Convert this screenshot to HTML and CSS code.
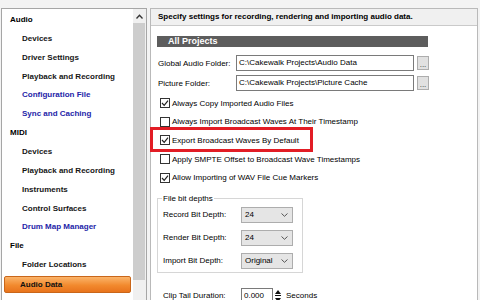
FILE: index.html
```html
<!DOCTYPE html>
<html>
<head>
    <title>Preferences - Audio Data</title>
    <link rel="stylesheet" href="styles.css">
</head>
<body>
    <div class="window">
        <div class="nav">
            <ul class="tree">
                <li class="cat">Audio</li>
                <li>Devices</li>
                <li>Driver Settings</li>
                <li>Playback and Recording</li>
                <li class="link">Configuration File</li>
                <li class="link">Sync and Caching</li>
                <li class="cat">MIDI</li>
                <li>Devices</li>
                <li>Playback and Recording</li>
                <li>Instruments</li>
                <li>Control Surfaces</li>
                <li class="link">Drum Map Manager</li>
                <li class="cat">File</li>
                <li>Folder Locations</li>
                <li class="sel">Audio Data</li>
            </ul>
            <div class="scroll">
                <div class="arrow">
                    <svg width="7" height="5" viewBox="0 0 7 5"><polyline points="0.5,4.5 3.5,1.2 6.5,4.5" fill="none" stroke="#333" stroke-width="1.3"/></svg>
                </div>
                <div class="thumb"></div>
            </div>
        </div>

        <div class="page">
            <div class="caption">Specify settings for recording, rendering and importing audio data.</div>
            <div class="content">
                <div class="section">All Projects</div>

                <div class="field first">
                    <span class="lbl">Global Audio Folder:</span>
                    <div class="path">C:\Cakewalk Projects\Audio Data</div>
                    <div class="more">...</div>
                </div>
                <div class="field">
                    <span class="lbl">Picture Folder:</span>
                    <div class="path">C:\Cakewalk Projects\Picture Cache</div>
                    <div class="more">...</div>
                </div>

                <div class="checks">
                    <div class="check on"><span class="box"><svg width="8" height="8" viewBox="0 0 8 8"><polyline points="1,4 3.2,6.3 7,1.6" fill="none" stroke="#222" stroke-width="1.2"/></svg></span>Always Copy Imported Audio Files</div>
                    <div class="check"><span class="box"></span>Always Import Broadcast Waves At Their Timestamp</div>
                    <div class="check on flag"><span class="box"><svg width="8" height="8" viewBox="0 0 8 8"><polyline points="1,4 3.2,6.3 7,1.6" fill="none" stroke="#222" stroke-width="1.2"/></svg></span>Export Broadcast Waves By Default</div>
                    <div class="check"><span class="box"></span>Apply SMPTE Offset to Broadcast Wave Timestamps</div>
                    <div class="check on"><span class="box"><svg width="8" height="8" viewBox="0 0 8 8"><polyline points="1,4 3.2,6.3 7,1.6" fill="none" stroke="#222" stroke-width="1.2"/></svg></span>Allow Importing of WAV File Cue Markers</div>
                </div>

                <fieldset class="group">
                    <legend>File bit depths</legend>
                    <div class="pick">
                        <span class="lbl">Record Bit Depth:</span>
                        <div class="select"><span>24</span><svg width="7" height="4" viewBox="0 0 7 4"><polyline points="0.5,0.5 3.5,3.3 6.5,0.5" fill="none" stroke="#555" stroke-width="1"/></svg></div>
                    </div>
                    <div class="pick">
                        <span class="lbl">Render Bit Depth:</span>
                        <div class="select"><span>24</span><svg width="7" height="4" viewBox="0 0 7 4"><polyline points="0.5,0.5 3.5,3.3 6.5,0.5" fill="none" stroke="#555" stroke-width="1"/></svg></div>
                    </div>
                    <div class="pick">
                        <span class="lbl">Import Bit Depth:</span>
                        <div class="select"><span>Original</span><svg width="7" height="4" viewBox="0 0 7 4"><polyline points="0.5,0.5 3.5,3.3 6.5,0.5" fill="none" stroke="#555" stroke-width="1"/></svg></div>
                    </div>
                </fieldset>

                <div class="pick tail">
                    <span class="lbl">Clip Tail Duration:</span>
                    <div class="num">0.000</div>
                    <svg class="spin" width="6" height="14" viewBox="0 0 6 14">
                        <polygon points="0,5 3,1 6,5" fill="#111"/>
                        <rect x="0" y="6" width="6" height="1" fill="#111"/>
                        <polygon points="0,9 3,13 6,9" fill="#111"/>
                    </svg>
                    <span class="unit">Seconds</span>
                </div>
            </div>
        </div>
    </div>
</body>
</html>
```

FILE: styles.css
```css
*,
*::before,
*::after {
    box-sizing: border-box;
}

body {
    margin: 0;
    background-color: #f3f3f3;
    font-family: "Liberation Sans", Arial, sans-serif;
    font-size: 8px;
    color: #000;
}

.window {
    display: flex;
    height: 300px;
    padding: 8px 0 0 1px;
    overflow: hidden;
}

/* left navigation tree */
.nav {
    display: flex;
    width: 146px;
    height: 310px;
    background-color: #fff;
    border: 1px solid #a6a6a6;
}

.tree {
    flex: 1;
    list-style: none;
    margin: 0;
    padding: 2px 0 0 0;
}

.tree li {
    height: 18.86px;
    line-height: 18.86px;
    padding-left: 20px;
    font-weight: bold;
    color: #161616;
    white-space: nowrap;
}

.tree .cat {
    padding-left: 8px;
    color: #000;
}

.tree .link {
    color: #2424a8;
}

.tree .sel {
    height: 17px;
    line-height: 15px;
    margin: 1px 2px 0 2px;
    padding-left: 15px;
    border: 1px solid #c9661a;
    border-radius: 2px;
    background: linear-gradient(#fbb46a, #f28a2e 55%, #e8731c);
    color: #111;
}

.scroll {
    width: 13px;
    background-color: #f0f0f0;
}

.arrow {
    height: 14px;
    display: flex;
    align-items: center;
    justify-content: center;
}

.thumb {
    height: 257px;
    width: 12px;
    background-color: #cdcdcd;
}

/* right settings page */
.page {
    width: 328px;
    height: 310px;
    margin-left: 3px;
    background-color: #fff;
    border: 1px solid #b9b9b9;
}

.caption {
    height: 17px;
    line-height: 16px;
    padding-left: 7px;
    background-color: #f0f0f0;
    border-bottom: 1px solid #cacaca;
    font-weight: bold;
    white-space: nowrap;
}

.content {
    padding: 10px 0 0 6px;
}

.section {
    width: 271px;
    height: 11px;
    line-height: 11px;
    padding-left: 11px;
    background-color: #5d5d5d;
    color: #fff;
    font-size: 9px;
    font-weight: bold;
}

.field {
    display: flex;
    align-items: center;
    height: 16px;
    margin-top: 4px;
    padding-left: 1px;
}

.field.first {
    margin-top: 8px;
}

.lbl {
    width: 78px;
    flex-shrink: 0;
    white-space: nowrap;
}

.path {
    width: 178px;
    height: 16px;
    line-height: 14px;
    padding-left: 2px;
    border: 1px solid #7a7a7a;
    white-space: nowrap;
}

.more {
    width: 12px;
    height: 14px;
    margin-left: 3px;
    line-height: 15px;
    text-align: center;
    background-color: #e1e1e1;
    border: 1px solid #adadad;
    color: #333;
}

.checks {
    margin-top: 3px;
}

.check {
    display: flex;
    align-items: center;
    height: 18.6px;
    padding-left: 3px;
    white-space: nowrap;
}

.box {
    display: flex;
    align-items: center;
    justify-content: center;
    width: 10px;
    height: 10px;
    margin-right: 2px;
    border: 1px solid #333;
    background-color: #fff;
}

.flag {
    position: relative;
}

/* red highlight drawn over the row */
.flag::after {
    content: "";
    position: absolute;
    left: -7px;
    top: -4px;
    width: 163px;
    height: 25px;
    border: 3px solid #e21d25;
}

.group {
    width: 146px;
    margin: 7px 0 0 0;
    padding: 3px 0 3px 5px;
    border: 1px solid #d6d6d6;
    display: flex;
    flex-direction: column;
    gap: 7px;
}

.group legend {
    padding: 0 1px;
    margin-left: -1px;
    line-height: 10px;
}

.pick {
    display: flex;
    align-items: center;
    height: 16px;
}

.select {
    display: flex;
    align-items: center;
    justify-content: space-between;
    width: 52px;
    height: 16px;
    padding: 0 4px 0 3px;
    background-color: #e5e5e5;
    border: 1px solid #adadad;
}

.tail {
    margin-top: 15px;
    padding-left: 6px;
}

.num {
    width: 32px;
    height: 16px;
    line-height: 14px;
    padding-left: 2px;
    border: 1px solid #7a7a7a;
}

.spin {
    margin-left: 2px;
}

.unit {
    margin-left: 5px;
}
```
